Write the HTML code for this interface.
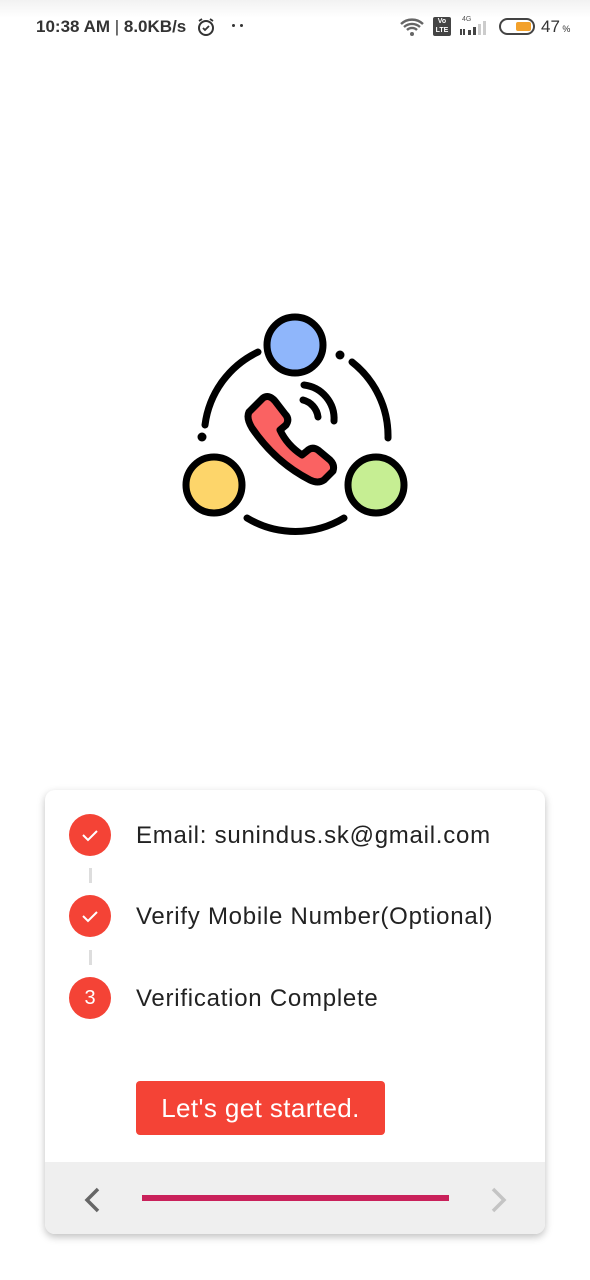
<!DOCTYPE html>
<html><head><meta charset="utf-8"><style>
*{margin:0;padding:0;box-sizing:border-box}
body{width:590px;height:1280px;background:#fff;position:relative;font-family:"Liberation Sans",sans-serif;overflow:hidden}
.sb{position:absolute;top:0;left:0;width:590px;height:50px;background:linear-gradient(#f2f2f2,#fff 18px)}
.abs{position:absolute}
.card{position:absolute;left:45px;top:790px;width:500px;height:444px;background:#fff;border-radius:10px;box-shadow:0 3px 8px rgba(0,0,0,.25);overflow:hidden}
.step{position:absolute;left:24px;width:42px;height:42px;border-radius:50%;background:#f44336;color:#fff;font-size:20px;text-align:center;line-height:42px}
.lbl{position:absolute;left:91px;font-size:24px;letter-spacing:0.75px;color:#222;line-height:28px;white-space:nowrap}
.conn{position:absolute;left:44px;width:3px;height:15px;background:#ddd}
.btn{position:absolute;left:91px;top:291px;width:249px;height:54px;background:#f44336;border-radius:4px;color:#fff;font-size:26px;letter-spacing:0.4px;text-align:center;line-height:54px}
.bar{position:absolute;left:0;top:372px;width:500px;height:72px;background:#efefef}
</style></head><body>
<div class="sb"></div>
<div class="abs" style="left:36px;top:17px;font-size:17px;font-weight:bold;color:#333">10:38 AM <span style="font-weight:normal">|</span> 8.0KB/s</div>
<svg class="abs" style="left:196px;top:17px" width="20" height="20" viewBox="0 0 20 20"><circle cx="10" cy="11" r="7" fill="none" stroke="#333" stroke-width="2"/><path d="M7 11l2 2 4-4M3 4l3-2M17 4l-3-2" stroke="#333" stroke-width="1.8" fill="none"/></svg>
<div class="abs" style="left:232px;top:24px;width:3px;height:3px;background:#333;border-radius:50%"></div>
<div class="abs" style="left:240px;top:24px;width:3px;height:3px;background:#333;border-radius:50%"></div>
<svg class="abs" style="left:400px;top:17px" width="26" height="20" viewBox="0 0 26 20"><path d="M1 7a16 16 0 0 1 22 0M4 10a12 12 0 0 1 16 0M7 13a7 7 0 0 1 10 0" stroke="#666" stroke-width="2.4" fill="none"/><circle cx="12" cy="17" r="2" fill="#666"/></svg>
<div class="abs" style="left:433px;top:17px;width:18px;height:19px;background:#444;border-radius:2px;color:#fff;font-size:7px;text-align:center;line-height:9px;font-weight:bold">Vo<br>LTE</div>
<div class="abs" style="left:462px;top:16px;font-size:7px;color:#555">4G</div>
<svg class="abs" style="left:458px;top:20px" width="32" height="16"><rect x="10" y="10" width="3" height="5" fill="#444"/><rect x="15" y="7" width="3" height="8" fill="#444"/><rect x="20" y="4" width="3" height="11" fill="#ccc"/><rect x="25" y="1" width="3" height="14" fill="#ccc"/><rect x="2" y="9" width="2" height="6" fill="#444"/><rect x="5" y="9" width="2" height="6" fill="#444"/></svg>
<div class="abs" style="left:499px;top:18px;width:36px;height:17px;border:2px solid #444;border-radius:9px"><div style="position:absolute;right:2px;top:2px;width:15px;height:9px;background:#f3a12b;border-radius:2px"></div></div>
<div class="abs" style="left:541px;top:17px;font-size:17px;color:#333">47<span style="font-size:9px"> %</span></div>

<svg class="abs" style="left:0;top:0" width="590" height="600" viewBox="0 0 590 600">
<g fill="none" stroke="#000" stroke-width="7" stroke-linecap="round">
<path d="M258 352 A94 94 0 0 0 205 425"/>
<path d="M352 362 A94 94 0 0 1 388 438"/>
<path d="M247 518 A94 94 0 0 0 344 518"/>
</g>
<circle cx="202" cy="437" r="4.5" fill="#000"/>
<circle cx="340" cy="355" r="4.5" fill="#000"/>
<circle cx="295" cy="345" r="28" fill="#8fb6fb" stroke="#000" stroke-width="7"/>
<circle cx="214" cy="485" r="28" fill="#fdd56a" stroke="#000" stroke-width="7"/>
<circle cx="376" cy="485" r="28" fill="#c6ee93" stroke="#000" stroke-width="7"/>
<path d="M263 398 L249 412 Q246 418 252 428 Q275 462 310 480 Q318 484 324 480 L333 471 Q335 465 330 460 L318 450 Q312 446 307 451 L302 455 Q287 445 280 430 L286 425 Q290 419 285 414 L275 401 Q269 394 263 398Z" fill="#fa6262" stroke="#000" stroke-width="7" stroke-linejoin="round"/>
<g fill="none" stroke="#000" stroke-width="7" stroke-linecap="round">
<path d="M303 400 A20 20 0 0 1 318 417"/>
<path d="M304 385 A34 34 0 0 1 334 421"/>
</g>
</svg>

<div class="card">
<div class="step" style="top:24px"><svg width="42" height="42"><path d="M14 21l5 5 9-9" stroke="#fff" stroke-width="2" fill="none"/></svg></div>
<div class="lbl" style="top:32px">Email: sunindus.sk@gmail.com</div>
<div class="conn" style="top:78px"></div>
<div class="step" style="top:105px"><svg width="42" height="42"><path d="M14 21l5 5 9-9" stroke="#fff" stroke-width="2" fill="none"/></svg></div>
<div class="lbl" style="top:113px">Verify Mobile Number(Optional)</div>
<div class="conn" style="top:160px"></div>
<div class="step" style="top:187px">3</div>
<div class="lbl" style="top:195px">Verification Complete</div>
<div class="btn">Let's get started.</div>
<div class="bar">
<svg class="abs" style="left:36px;top:24px" width="22" height="28"><path d="M17 3L6 14l11 11" stroke="#666" stroke-width="3.5" fill="none"/></svg>
<div class="abs" style="left:97px;top:33px;width:307px;height:6px;background:#c9215a"></div>
<svg class="abs" style="left:443px;top:24px" width="22" height="28"><path d="M5 3l11 11L5 25" stroke="#c4c4c4" stroke-width="3.5" fill="none"/></svg>
</div>
</div>
</body></html>
